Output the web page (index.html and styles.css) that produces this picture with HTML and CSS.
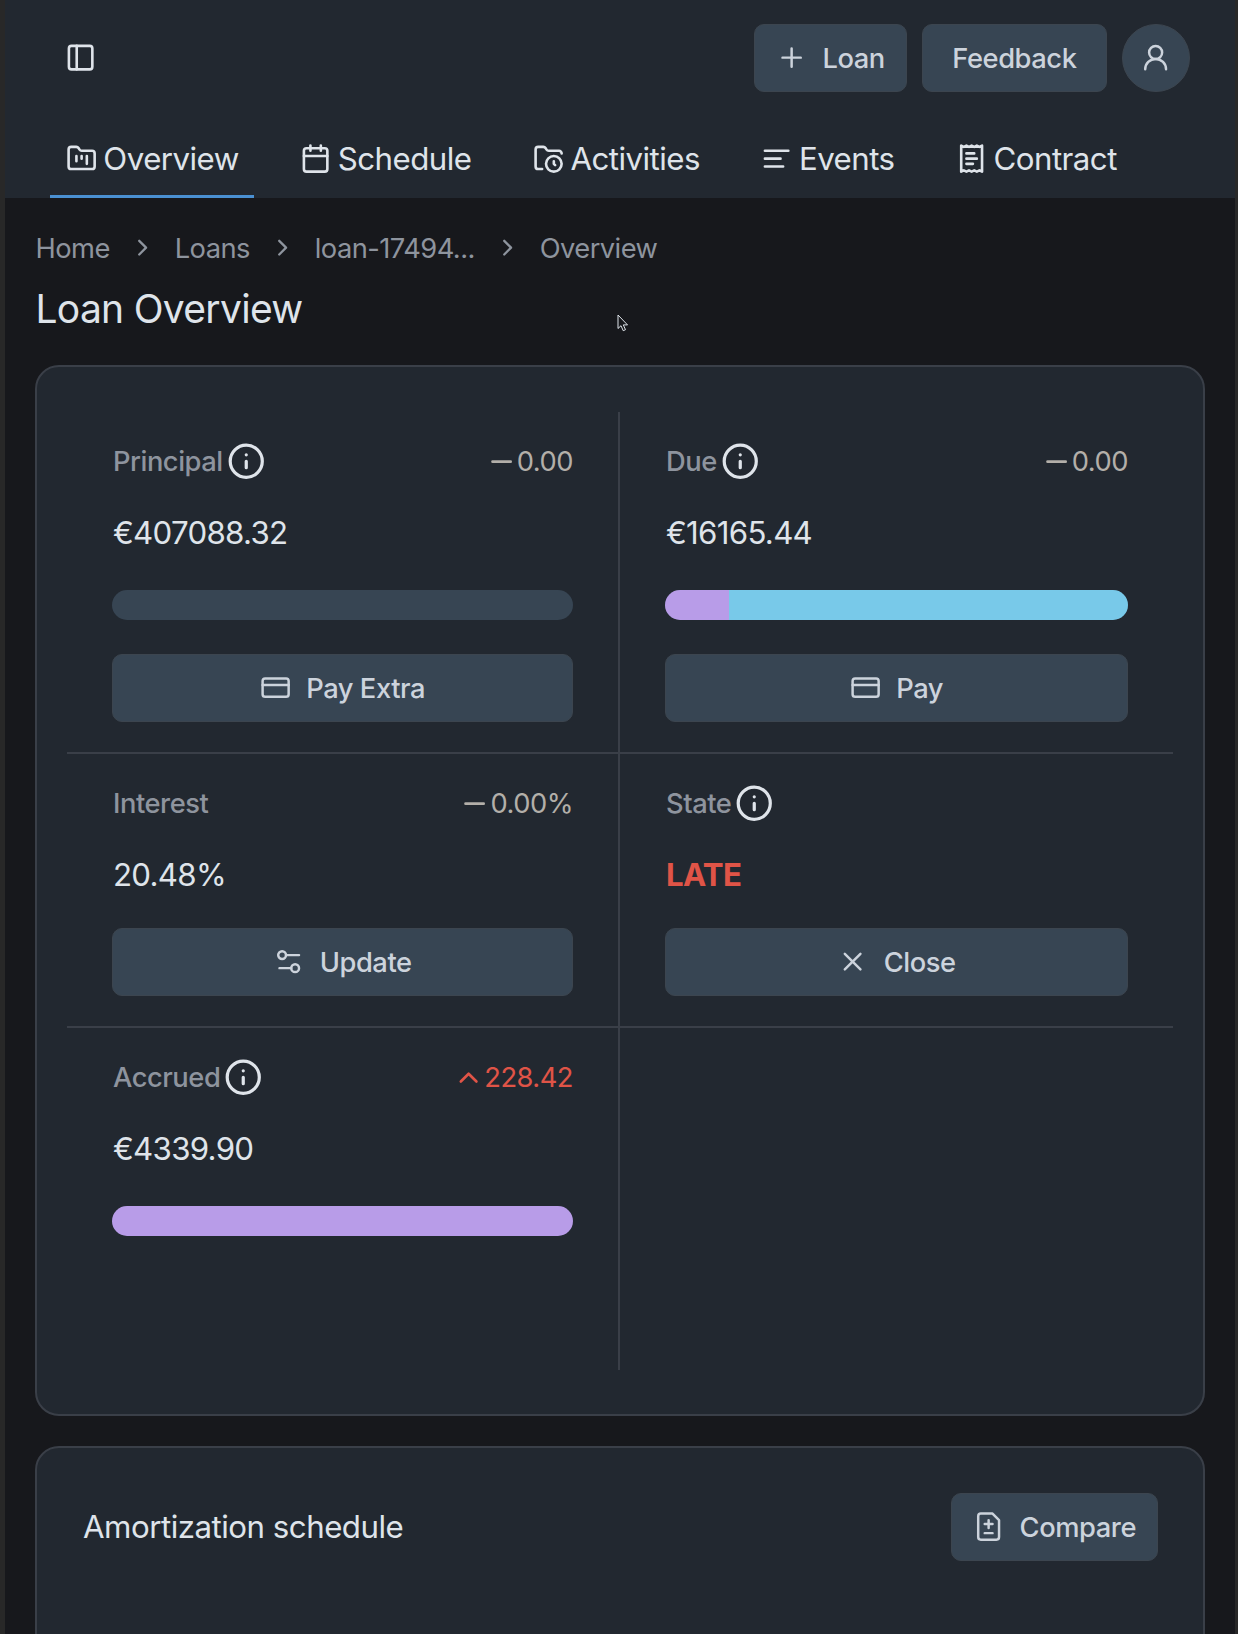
FILE: index.html
```html
<!DOCTYPE html>
<html lang="en">
<head>
    <meta charset="utf-8">
    <title>Loan Overview</title>
    <link rel="stylesheet" href="styles.css">
</head>
<body>
<div class="app">
    <header class="header">
        <div class="topbar">
            <svg class="icon" viewBox="0 0 24 24"><rect x="3" y="3" width="18" height="18" rx="2"/><path d="M9 3v18"/></svg>
            <div class="actions">
                <button class="btn">
                    <svg class="icon thin" viewBox="0 0 24 24"><path d="M5 12h14M12 5v14"/></svg>
                    Loan
                </button>
                <button class="btn feedback">Feedback</button>
                <button class="btn avatar">
                    <svg class="icon thin" viewBox="0 0 24 24"><circle cx="12" cy="8" r="5"/><path d="M20 21a8 8 0 0 0-16 0"/></svg>
                </button>
            </div>
        </div>
        <nav class="tabs">
            <a class="tab active">
                <svg class="icon" viewBox="0 0 24 24"><path d="M4 20h16a2 2 0 0 0 2-2V8a2 2 0 0 0-2-2h-7.93a2 2 0 0 1-1.66-.9l-.82-1.2A2 2 0 0 0 7.93 3H4a2 2 0 0 0-2 2v13c0 1.1.9 2 2 2Z"/><path d="M8 10v4M12 10v2M16 10v6"/></svg>
                Overview
            </a>
            <a class="tab">
                <svg class="icon" viewBox="0 0 24 24"><path d="M8 2v4M16 2v4"/><rect x="3" y="4" width="18" height="18" rx="2"/><path d="M3 10h18"/></svg>
                Schedule
            </a>
            <a class="tab">
                <svg class="icon" viewBox="0 0 24 24"><circle cx="16" cy="16" r="6"/><path d="M7 20H4a2 2 0 0 1-2-2V5a2 2 0 0 1 2-2h3.9a2 2 0 0 1 1.69.9l.81 1.2a2 2 0 0 0 1.67.9H20a2 2 0 0 1 2 2"/><path d="M16 14v2l1 1"/></svg>
                Activities
            </a>
            <a class="tab">
                <svg class="icon" viewBox="0 0 24 24"><path d="M21 6H3M15 12H3M17 18H3"/></svg>
                Events
            </a>
            <a class="tab">
                <svg class="icon" viewBox="0 0 24 24"><path d="M4 2v20l2-1 2 1 2-1 2 1 2-1 2 1 2-1 2 1V2l-2 1-2-1-2 1-2-1-2 1-2-1-2 1Z"/><path d="M14 8H8M16 12H8M13 16H8"/></svg>
                Contract
            </a>
        </nav>
    </header>

    <main class="content">
        <div class="breadcrumbs">
            <span>Home</span>
            <svg class="icon sep" viewBox="0 0 24 24"><path d="m9 18 6-6-6-6"/></svg>
            <span>Loans</span>
            <svg class="icon sep" viewBox="0 0 24 24"><path d="m9 18 6-6-6-6"/></svg>
            <span>loan-17494...</span>
            <svg class="icon sep" viewBox="0 0 24 24"><path d="m9 18 6-6-6-6"/></svg>
            <span>Overview</span>
        </div>
        <h1 class="page-title">Loan Overview</h1>

        <section class="card stats">
            <div class="cell">
                <div class="cell-head">
                    <span class="label">Principal</span>
                    <svg class="icon info" viewBox="0 0 24 24"><circle cx="12" cy="12" r="10"/><path d="M12 16v-4M12 8h.01"/></svg>
                    <span class="delta"><svg class="icon" viewBox="0 0 24 24"><path d="M5 12h14"/></svg>0.00</span>
                </div>
                <div class="value">€407088.32</div>
                <div class="bar"></div>
                <button class="btn wide">
                    <svg class="icon thin" viewBox="0 0 24 24"><rect x="2" y="5" width="20" height="14" rx="2"/><path d="M2 10h20"/></svg>
                    Pay Extra
                </button>
            </div>
            <div class="cell">
                <div class="cell-head">
                    <span class="label">Due</span>
                    <svg class="icon info" viewBox="0 0 24 24"><circle cx="12" cy="12" r="10"/><path d="M12 16v-4M12 8h.01"/></svg>
                    <span class="delta"><svg class="icon" viewBox="0 0 24 24"><path d="M5 12h14"/></svg>0.00</span>
                </div>
                <div class="value">€16165.44</div>
                <div class="bar">
                    <div class="bar-interest" style="width: 13.8%"></div>
                    <div class="bar-principal" style="width: 86.2%"></div>
                </div>
                <button class="btn wide">
                    <svg class="icon thin" viewBox="0 0 24 24"><rect x="2" y="5" width="20" height="14" rx="2"/><path d="M2 10h20"/></svg>
                    Pay
                </button>
            </div>
            <div class="cell">
                <div class="cell-head">
                    <span class="label">Interest</span>
                    <span class="delta"><svg class="icon" viewBox="0 0 24 24"><path d="M5 12h14"/></svg>0.00%</span>
                </div>
                <div class="value">20.48%</div>
                <button class="btn wide">
                    <svg class="icon thin" viewBox="0 0 24 24"><path d="M20 7H10M14 17H5"/><circle cx="17" cy="17" r="3"/><circle cx="7" cy="7" r="3"/></svg>
                    Update
                </button>
            </div>
            <div class="cell">
                <div class="cell-head">
                    <span class="label">State</span>
                    <svg class="icon info" viewBox="0 0 24 24"><circle cx="12" cy="12" r="10"/><path d="M12 16v-4M12 8h.01"/></svg>
                </div>
                <div class="value late">LATE</div>
                <button class="btn wide">
                    <svg class="icon thin" viewBox="0 0 24 24"><path d="M18 6 6 18M6 6l12 12"/></svg>
                    Close
                </button>
            </div>
            <div class="cell">
                <div class="cell-head">
                    <span class="label">Accrued</span>
                    <svg class="icon info" viewBox="0 0 24 24"><circle cx="12" cy="12" r="10"/><path d="M12 16v-4M12 8h.01"/></svg>
                    <span class="delta up"><svg class="icon" viewBox="0 0 24 24"><path d="m18 15-6-6-6 6"/></svg>228.42</span>
                </div>
                <div class="value">€4339.90</div>
                <div class="bar">
                    <div class="bar-interest" style="width: 100%"></div>
                </div>
            </div>
            <div class="cell"></div>
        </section>

        <section class="card schedule">
            <h2 class="card-title">Amortization schedule</h2>
            <button class="btn">
                <svg class="icon thin" viewBox="0 0 24 24"><path d="M15 2H6a2 2 0 0 0-2 2v16a2 2 0 0 0 2 2h12a2 2 0 0 0 2-2V7Z"/><path d="M9 10h6M12 13V7M9 17h6"/></svg>
                Compare
            </button>
        </section>
    </main>

    <svg class="cursor" viewBox="0 0 12 18"><path d="M1 1v13.5l3-2.8 2.2 5 2.3-1-2.2-4.8h4.2Z"/></svg>
</div>
</body>
</html>
```
FILE: styles.css
```css
* {
    box-sizing: border-box;
}

body {
    margin: 0;
    background-color: #282828;
    font-family: Inter, sans-serif;
    font-size: 27.3px;
    letter-spacing: -0.018em;
    color: #dfe4ea;
    overflow: hidden;
}

.app {
    height: 1634px;
    margin: 0 3px 0 5px;
    background-color: #17181c;
    overflow: hidden;
}

.icon {
    width: 31.25px;
    height: 31.25px;
    flex-shrink: 0;
    fill: none;
    stroke: currentColor;
    stroke-width: 2;
    stroke-linecap: round;
    stroke-linejoin: round;
}

.icon.thin {
    stroke-width: 1.9;
}

/* Header */
.header {
    height: 198px;
    background-color: #222830;
}

.topbar {
    display: flex;
    align-items: center;
    justify-content: space-between;
    height: 116px;
    padding: 0 45px 0 60px;
}

.actions {
    display: flex;
    gap: 15.5px;
}

.btn {
    display: flex;
    align-items: center;
    justify-content: center;
    gap: 15px;
    height: 68px;
    padding: 0 21px;
    border: 1px solid #3c454f;
    border-radius: 10px;
    background-color: #374553;
    color: #ccd3dc;
    font-family: inherit;
    font-size: 27.3px;
    font-weight: 500;
    letter-spacing: -0.016em;
}

.btn.feedback {
    padding: 0 29px;
}

.btn.avatar {
    width: 68px;
    padding: 0;
    border-radius: 50%;
}

.btn.wide {
    width: 100%;
}

.tabs {
    display: flex;
    gap: 30px;
    height: 82px;
    padding-left: 45px;
}

.tab {
    display: flex;
    align-items: center;
    gap: 6.5px;
    padding: 6px 15.6px 0;
    border-bottom: 3px solid transparent;
    font-size: 31.25px;
    letter-spacing: -0.017em;
}

.tab.active {
    border-bottom-color: #4a90d2;
}

/* Page content */
.content {
    padding: 0 30px;
}

.breadcrumbs {
    display: flex;
    align-items: center;
    gap: 18.8px;
    height: 40px;
    margin-top: 30px;
    padding-left: 0.5px;
    color: #8e949e;
    letter-spacing: -0.02em;
}

.icon.sep {
    width: 27.3px;
    height: 27.3px;
}

.page-title {
    margin: 17px 0 33px;
    padding-left: 0.5px;
    font-size: 39px;
    font-weight: 400;
    line-height: 47px;
    letter-spacing: -0.018em;
}

.card {
    border: 2px solid #3a3f48;
    border-radius: 24px;
    background-color: #222830;
}

.stats {
    display: grid;
    grid-template-columns: 553px 553px;
    grid-template-rows: 342px 274px 342px;
    height: 1051px;
    padding: 45px 30px;
    margin-bottom: 30px;
}

.cell {
    padding: 30px 45px 0;
    border-bottom: 2px solid #3a3f48;
}

.cell:nth-child(odd) {
    border-right: 2px solid #3a3f48;
}

.cell:nth-last-child(-n+2) {
    border-bottom: none;
}

.cell-head {
    display: flex;
    align-items: center;
    gap: 4px;
    height: 39px;
    padding-left: 1px;
}

.label {
    color: #8e949e;
    font-weight: 500;
    letter-spacing: -0.017em;
}

.icon.info {
    width: 38.5px;
    height: 38.5px;
}

.delta {
    display: flex;
    align-items: center;
    margin-left: auto;
    color: #b3afa9;
}

.delta.up {
    color: #e05447;
}

.value {
    margin: 29px 0;
    padding-left: 1px;
    font-size: 31.25px;
    line-height: 47px;
    letter-spacing: -0.023em;
}

.value.late {
    color: #e05447;
    font-weight: 700;
}

.bar {
    display: flex;
    height: 30px;
    margin: 33px 0 34px;
    border-radius: 15px;
    background-color: #374553;
    overflow: hidden;
}

.bar-interest {
    background-color: #b89ce8;
}

.bar-principal {
    background-color: #78c9e9;
}

.schedule {
    display: flex;
    align-items: flex-start;
    justify-content: space-between;
    height: 400px;
    padding: 45px;
}

.card-title {
    margin: 0;
    padding-left: 1px;
    font-size: 31.25px;
    font-weight: 400;
    line-height: 69px;
    letter-spacing: -0.016em;
}

.cursor {
    position: absolute;
    left: 617px;
    top: 314px;
    width: 12px;
    height: 18px;
    fill: #17181c;
    stroke: #dfe4ea;
    stroke-width: 1;
}
```
